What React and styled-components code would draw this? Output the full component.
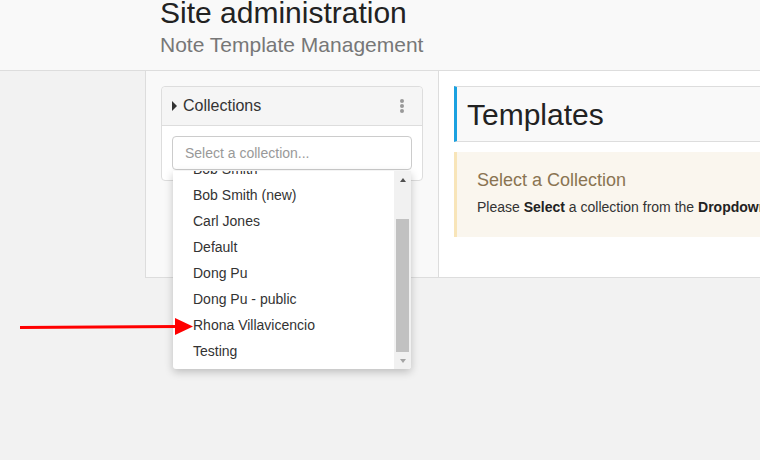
import React from 'react';
import styled, { createGlobalStyle } from 'styled-components';

const GlobalStyle = createGlobalStyle`
  html, body {
    margin: 0;
    padding: 0;
    overflow: hidden;
  }
  body {
    font-family: "Liberation Sans", Arial, sans-serif;
    color: #333;
    background: #f2f2f2;
  }
  * { box-sizing: border-box; }
`;

const Page = styled.div`
  position: relative;
  width: 760px;
  height: 460px;
  background: #f2f2f2;
  overflow: hidden;
`;

const Header = styled.header`
  display: flow-root;
  height: 71px;
  padding-left: 160px;
  background: #f9f9f9;
  border-bottom: 1px solid #ddd;
`;

const Title = styled.h1`
  margin: -2px 0 0;
  font-size: 30px;
  line-height: 30px;
  font-weight: normal;
  color: #222;
`;

const Subtitle = styled.h2`
  margin: 5px 0 0;
  font-size: 21px;
  line-height: 1.1;
  font-weight: normal;
  color: #777;
`;

const Panel = styled.div`
  display: grid;
  grid-template-columns: 293px 1fr;
  width: 800px;
  margin-left: 145px;
  border-left: 1px solid #ddd;
  border-bottom: 1px solid #ddd;
`;

const Sidebar = styled.aside`
  padding: 15px;
  background: #f9f9f9;
  border-right: 1px solid #ddd;
`;

const Card = styled.div`
  background: #fff;
  border: 1px solid #ddd;
  border-radius: 4px;
`;

const CardHeader = styled.div`
  display: flex;
  align-items: center;
  padding: 10px;
  background: #f5f5f5;
  border-bottom: 1px solid #ddd;
  border-radius: 4px 4px 0 0;
`;

const Caret = styled.span`
  width: 0;
  height: 0;
  border-top: 5px solid transparent;
  border-bottom: 5px solid transparent;
  border-left: 5px solid #333;
  margin-right: 6px;
`;

const CardTitle = styled.span`
  flex: 1;
  font-size: 16px;
  line-height: 18px;
  color: #333;
`;

const Kebab = styled.span`
  display: flex;
  flex-direction: column;
  gap: 1px;
  margin-right: 8px;

  i {
    width: 4px;
    height: 4px;
    border-radius: 50%;
    background: #999;
  }
`;

const CardBody = styled.div`
  padding: 10px;
`;

const SelectWrap = styled.div`
  position: relative;
`;

const SelectBox = styled.div`
  height: 34px;
  padding: 0 12px;
  border: 1px solid #ccc;
  border-radius: 4px;
  background: #fff;
  font-size: 14px;
  line-height: 32px;
  color: #999;
`;

const Dropdown = styled.div`
  position: absolute;
  top: 35px;
  left: 1px;
  right: 1px;
  height: 198px;
  display: flex;
  background: #fff;
  box-shadow: 0 3px 8px rgba(0, 0, 0, 0.22);
  border-radius: 0 0 3px 3px;
  overflow: hidden;
  z-index: 2;
`;

const OptionList = styled.ul`
  flex: 1;
  list-style: none;
  margin: 0;
  padding: 0;
  overflow: hidden;
`;

const Option = styled.li`
  padding: 0 20px;
  font-size: 14px;
  line-height: 26px;
  color: #333;
  white-space: nowrap;
`;

const Scrollbar = styled.div`
  width: 17px;
  display: flex;
  flex-direction: column;
  background: #f1f1f1;
`;

const ScrollButton = styled.div`
  height: 17px;
  display: flex;
  align-items: center;
  justify-content: center;

  &::after {
    content: '';
    width: 0;
    height: 0;
    border-left: 3.5px solid transparent;
    border-right: 3.5px solid transparent;
    ${(p) => (p.$down
      ? 'border-top: 4px solid #a3a3a3;'
      : 'border-bottom: 4px solid #505050;')}
  }
`;

const ScrollTrack = styled.div`
  flex: 1;
  display: flex;
  flex-direction: column;
  justify-content: flex-end;
  padding: 0 2px;
`;

const Thumb = styled.div`
  background: #c1c1c1;
`;

const Content = styled.main`
  padding: 15px 15px 15px;
  background: #fff;
`;

const SectionHeader = styled.div`
  height: 56px;
  display: flex;
  align-items: center;
  padding-left: 10px;
  background: #f9f9f9;
  border: 1px solid #ddd;
  border-left: 3px solid #1ba1e0;
  margin-bottom: 10px;

  h3 {
    margin: 0;
    font-size: 30px;
    line-height: 1.1;
    font-weight: normal;
    color: #222;
  }
`;

const Alert = styled.div`
  height: 85px;
  padding: 19px 20px 0;
  margin-bottom: 25px;
  background: #faf6ee;
  border-left: 3px solid #f8e5b9;
  white-space: nowrap;

  h4 {
    margin: 0 0 6px;
    font-size: 18px;
    line-height: 1.1;
    font-weight: normal;
    color: #8a7452;
  }

  p {
    margin: 0;
    font-size: 14px;
    line-height: 20px;
    color: #333;
  }

  b {
    color: #222;
  }
`;

const Arrow = styled.svg`
  position: absolute;
  left: 0;
  top: 0;
  pointer-events: none;
  z-index: 3;
`;

const collections = [
  'Bob Smith',
  'Bob Smith (new)',
  'Carl Jones',
  'Default',
  'Dong Pu',
  'Dong Pu - public',
  'Rhona Villavicencio',
  'Testing',
];

export default function App() {
  return (
    <>
      <GlobalStyle />
      <Page>
        <Header>
          <Title>Site administration</Title>
          <Subtitle>Note Template Management</Subtitle>
        </Header>

        <Panel>
          <Sidebar>
            <Card>
              <CardHeader>
                <Caret />
                <CardTitle>Collections</CardTitle>
                <Kebab><i /><i /><i /></Kebab>
              </CardHeader>
              <CardBody>
                <SelectWrap>
                  <SelectBox>Select a collection...</SelectBox>
                  <Dropdown>
                    <OptionList>
                      <div style={{ marginTop: -15 }}>
                        {collections.map((name) => (
                          <Option key={name}>{name}</Option>
                        ))}
                      </div>
                    </OptionList>
                    <Scrollbar>
                      <ScrollButton />
                      <ScrollTrack>
                        <Thumb style={{ height: 133 }} />
                      </ScrollTrack>
                      <ScrollButton $down />
                    </Scrollbar>
                  </Dropdown>
                </SelectWrap>
              </CardBody>
            </Card>
          </Sidebar>

          <Content>
            <SectionHeader>
              <h3>Templates</h3>
            </SectionHeader>
            <Alert>
              <h4>Select a Collection</h4>
              <p>Please <b>Select</b> a collection from the <b>Dropdown</b> on the left.</p>
            </Alert>
          </Content>
        </Panel>

        <Arrow width="200" height="460" viewBox="0 0 200 460">
          <line x1="20" y1="327.5" x2="178" y2="326.5" stroke="#ff0000" strokeWidth="3" />
          <polygon points="175,318 193,326.5 175,335" fill="#ff0000" />
        </Arrow>
      </Page>
    </>
  );
}
